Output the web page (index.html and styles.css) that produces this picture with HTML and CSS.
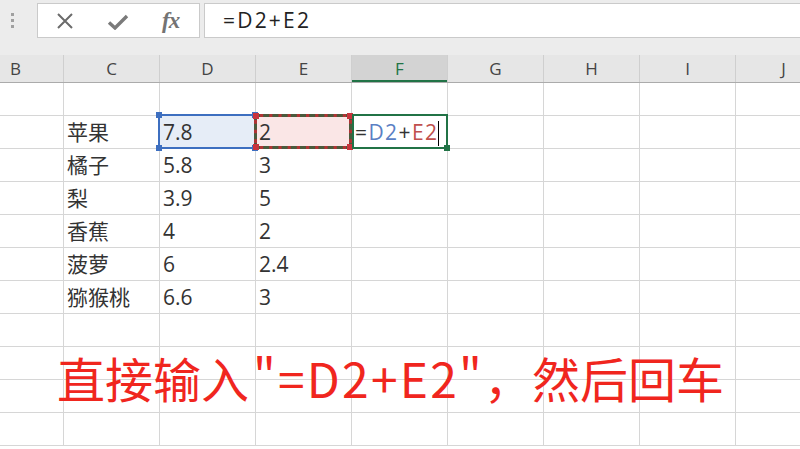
FILE: index.html
```html
<!DOCTYPE html>
<html lang="zh-CN">
<head>
<meta charset="utf-8">
<title>Excel</title>
<link rel="stylesheet" href="styles.css">
</head>
<body>
<div class="app">
  <div class="fbar">
    <div class="grip"><i></i><i></i><i></i></div>
    <div class="fbtns">
      <span class="ic ic-x"><svg width="18" height="18" viewBox="0 0 18 18"><path d="M2 2 L16 16 M16 2 L2 16" stroke="#6b6b6b" stroke-width="2" fill="none"/></svg></span>
      <span class="ic ic-ok"><svg width="22" height="16" viewBox="0 0 22 16"><path d="M2 8.5 L8 14 L20 2" stroke="#7a7a7a" stroke-width="3.4" fill="none" stroke-linejoin="miter"/></svg></span>
      <span class="fx">fx</span>
    </div>
    <div class="finput">=D2+E2</div>
  </div>

  <div class="sheet">
    <div class="row hdr">
      <div class="c first">B</div><div class="c">C</div><div class="c">D</div><div class="c">E</div><div class="c active">F</div><div class="c">G</div><div class="c">H</div><div class="c">I</div><div class="c">J</div>
    </div>
    <div class="row"><div class="c first"></div><div class="c"></div><div class="c"></div><div class="c"></div><div class="c"></div><div class="c"></div><div class="c"></div><div class="c"></div><div class="c"></div></div>
    <div class="row"><div class="c first"></div><div class="c">苹果</div><div class="c sel-d"><div class="sel blue"><b class="h tl"></b><b class="h tr"></b><b class="h bl"></b><b class="h br"></b></div><span class="v">7.8</span></div><div class="c sel-e"><div class="sel red"><b class="h tl"></b><b class="h tr"></b><b class="h bl"></b><b class="h br"></b></div><span class="v">2</span></div><div class="c sel-f"><div class="sel green"><b class="h br"></b></div><span class="v fm">=<span class="rd">D2</span>+<span class="re">E2</span><span class="caret"></span></span></div><div class="c"></div><div class="c"></div><div class="c"></div><div class="c"></div></div>
    <div class="row"><div class="c first"></div><div class="c">橘子</div><div class="c">5.8</div><div class="c">3</div><div class="c"></div><div class="c"></div><div class="c"></div><div class="c"></div><div class="c"></div></div>
    <div class="row"><div class="c first"></div><div class="c">梨</div><div class="c">3.9</div><div class="c">5</div><div class="c"></div><div class="c"></div><div class="c"></div><div class="c"></div><div class="c"></div></div>
    <div class="row"><div class="c first"></div><div class="c">香蕉</div><div class="c">4</div><div class="c">2</div><div class="c"></div><div class="c"></div><div class="c"></div><div class="c"></div><div class="c"></div></div>
    <div class="row"><div class="c first"></div><div class="c">菠萝</div><div class="c">6</div><div class="c">2.4</div><div class="c"></div><div class="c"></div><div class="c"></div><div class="c"></div><div class="c"></div></div>
    <div class="row"><div class="c first"></div><div class="c">猕猴桃</div><div class="c">6.6</div><div class="c">3</div><div class="c"></div><div class="c"></div><div class="c"></div><div class="c"></div><div class="c"></div></div>
    <div class="row"><div class="c first"></div><div class="c"></div><div class="c"></div><div class="c"></div><div class="c"></div><div class="c"></div><div class="c"></div><div class="c"></div><div class="c"></div></div>
    <div class="row"><div class="c first"></div><div class="c"></div><div class="c"></div><div class="c"></div><div class="c"></div><div class="c"></div><div class="c"></div><div class="c"></div><div class="c"></div></div>
    <div class="row"><div class="c first"></div><div class="c"></div><div class="c"></div><div class="c"></div><div class="c"></div><div class="c"></div><div class="c"></div><div class="c"></div><div class="c"></div></div>
    <div class="row"><div class="c first"></div><div class="c"></div><div class="c"></div><div class="c"></div><div class="c"></div><div class="c"></div><div class="c"></div><div class="c"></div><div class="c"></div></div>
  </div>

  <div class="caption">直接输入<span class="lat">"=D2+E2"</span>，然后回车</div>
</div>
</body>
</html>
```

FILE: styles.css
```css
html, body {
  margin: 0;
  padding: 0;
  background: #ffffff;
}
.app {
  position: relative;
  width: 800px;
  height: 449px;
  overflow: hidden;
  font-family: "Open Sans", "Noto Sans CJK SC", sans-serif;
  color: #333333;
}

/* formula bar */
.fbar {
  height: 55px;
  box-sizing: border-box;
  padding-top: 3px;
  background: #ececec;
  display: flex;
  align-items: flex-start;
}
.grip {
  width: 37px;
  height: 35px;
  display: flex;
  flex-direction: column;
  align-items: flex-start;
  justify-content: center;
  gap: 3px;
  padding-left: 11px;
  box-sizing: border-box;
}
.grip i {
  display: block;
  width: 3px;
  height: 3px;
  background: #a0a0a0;
}
.fbtns {
  width: 163px;
  height: 35px;
  box-sizing: border-box;
  background: #ffffff;
  border: 1px solid #cacaca;
  display: flex;
  align-items: center;
  margin-right: 4px;
}
.ic {
  display: flex;
  align-items: center;
  justify-content: center;
}
.ic-x { width: 18px; margin-left: 18px; }
.ic-ok { width: 22px; margin-left: 33px; margin-top: 2px; }
.fx {
  font-family: "Liberation Serif", serif;
  font-style: italic;
  font-weight: bold;
  font-size: 23px;
  color: #737373;
  margin-left: 33px;
  letter-spacing: -1px;
  line-height: 30px;
}
.finput {
  flex: 1;
  height: 35px;
  box-sizing: border-box;
  background: #ffffff;
  border: 1px solid #cacaca;
  border-right: none;
  padding-left: 18px;
  font-size: 21px;
  letter-spacing: 2.2px;
  line-height: 32px;
  color: #222222;
}

/* sheet */
.row {
  display: grid;
  grid-template-columns: 64px repeat(8, 96px);
  height: 33px;
  box-sizing: border-box;
  border-bottom: 1px solid #d6d6d6;
}
.c {
  position: relative;
  border-right: 1px solid #d6d6d6;
  padding-left: 3px;
  font-size: 21px;
  line-height: 32px;
  white-space: nowrap;
  color: #333333;
}
.hdr {
  height: 28px;
  background: #e6e6e6;
  border-bottom: 1px solid #ababab;
}
.hdr .c {
  padding-left: 0;
  text-align: center;
  font-size: 17px;
  line-height: 27px;
  color: #444444;
  border-right: 1px solid #cfcfcf;
}
.hdr .c.first {
  padding-right: 32px;
}
.hdr .c.active {
  background: #d3d3d3;
  color: #217346;
  box-shadow: inset 0 -2px 0 #217346;
}

.v { position: relative; z-index: 3; }
.fm { letter-spacing: 1.4px; }
.sel-d { background: #e6edf7; }
.sel-e { background: #fae6e6; }
.rd { color: #5b7fc4; }
.re { color: #c0504d; }
.caret {
  display: inline-block;
  width: 1px;
  height: 25px;
  background: #000000;
  vertical-align: -6px;
  margin-left: 0;
}

.sel {
  position: absolute;
  left: -2px;
  top: -2px;
  right: -1px;
  bottom: -1px;
  box-sizing: border-box;
  border: 2px solid;
  z-index: 2;
}
.sel.blue { border-color: #3d6fc0; }
.sel.red { border-color: #b03434; border-width: 3px; }
.sel.red::after {
  content: "";
  position: absolute;
  left: -3px; top: -3px; right: -3px; bottom: -3px;
  border: 3px dashed #4a5a3c;
}
.sel.green { border-color: #217346; left: 0; z-index: 4; }
.h {
  position: absolute;
  width: 6px;
  height: 6px;
  z-index: 5;
}
.blue .h { background: #3d6fc0; }
.red .h { background: #c8343c; }
.green .h { background: #217346; }
.h.tl { left: -4px; top: -4px; }
.h.tr { right: -4px; top: -4px; }
.h.bl { left: -4px; bottom: -4px; }
.h.br { right: -4px; bottom: -4px; }

/* caption overlay */
.caption {
  position: absolute;
  left: 57px;
  top: 353px;
  font-family: "Noto Sans CJK SC", sans-serif;
  font-size: 48px;
  line-height: 48px;
  color: #f0261e;
  white-space: nowrap;
}
.caption .lat {
  letter-spacing: 2.2px;
  padding-left: 4px;
}
```
